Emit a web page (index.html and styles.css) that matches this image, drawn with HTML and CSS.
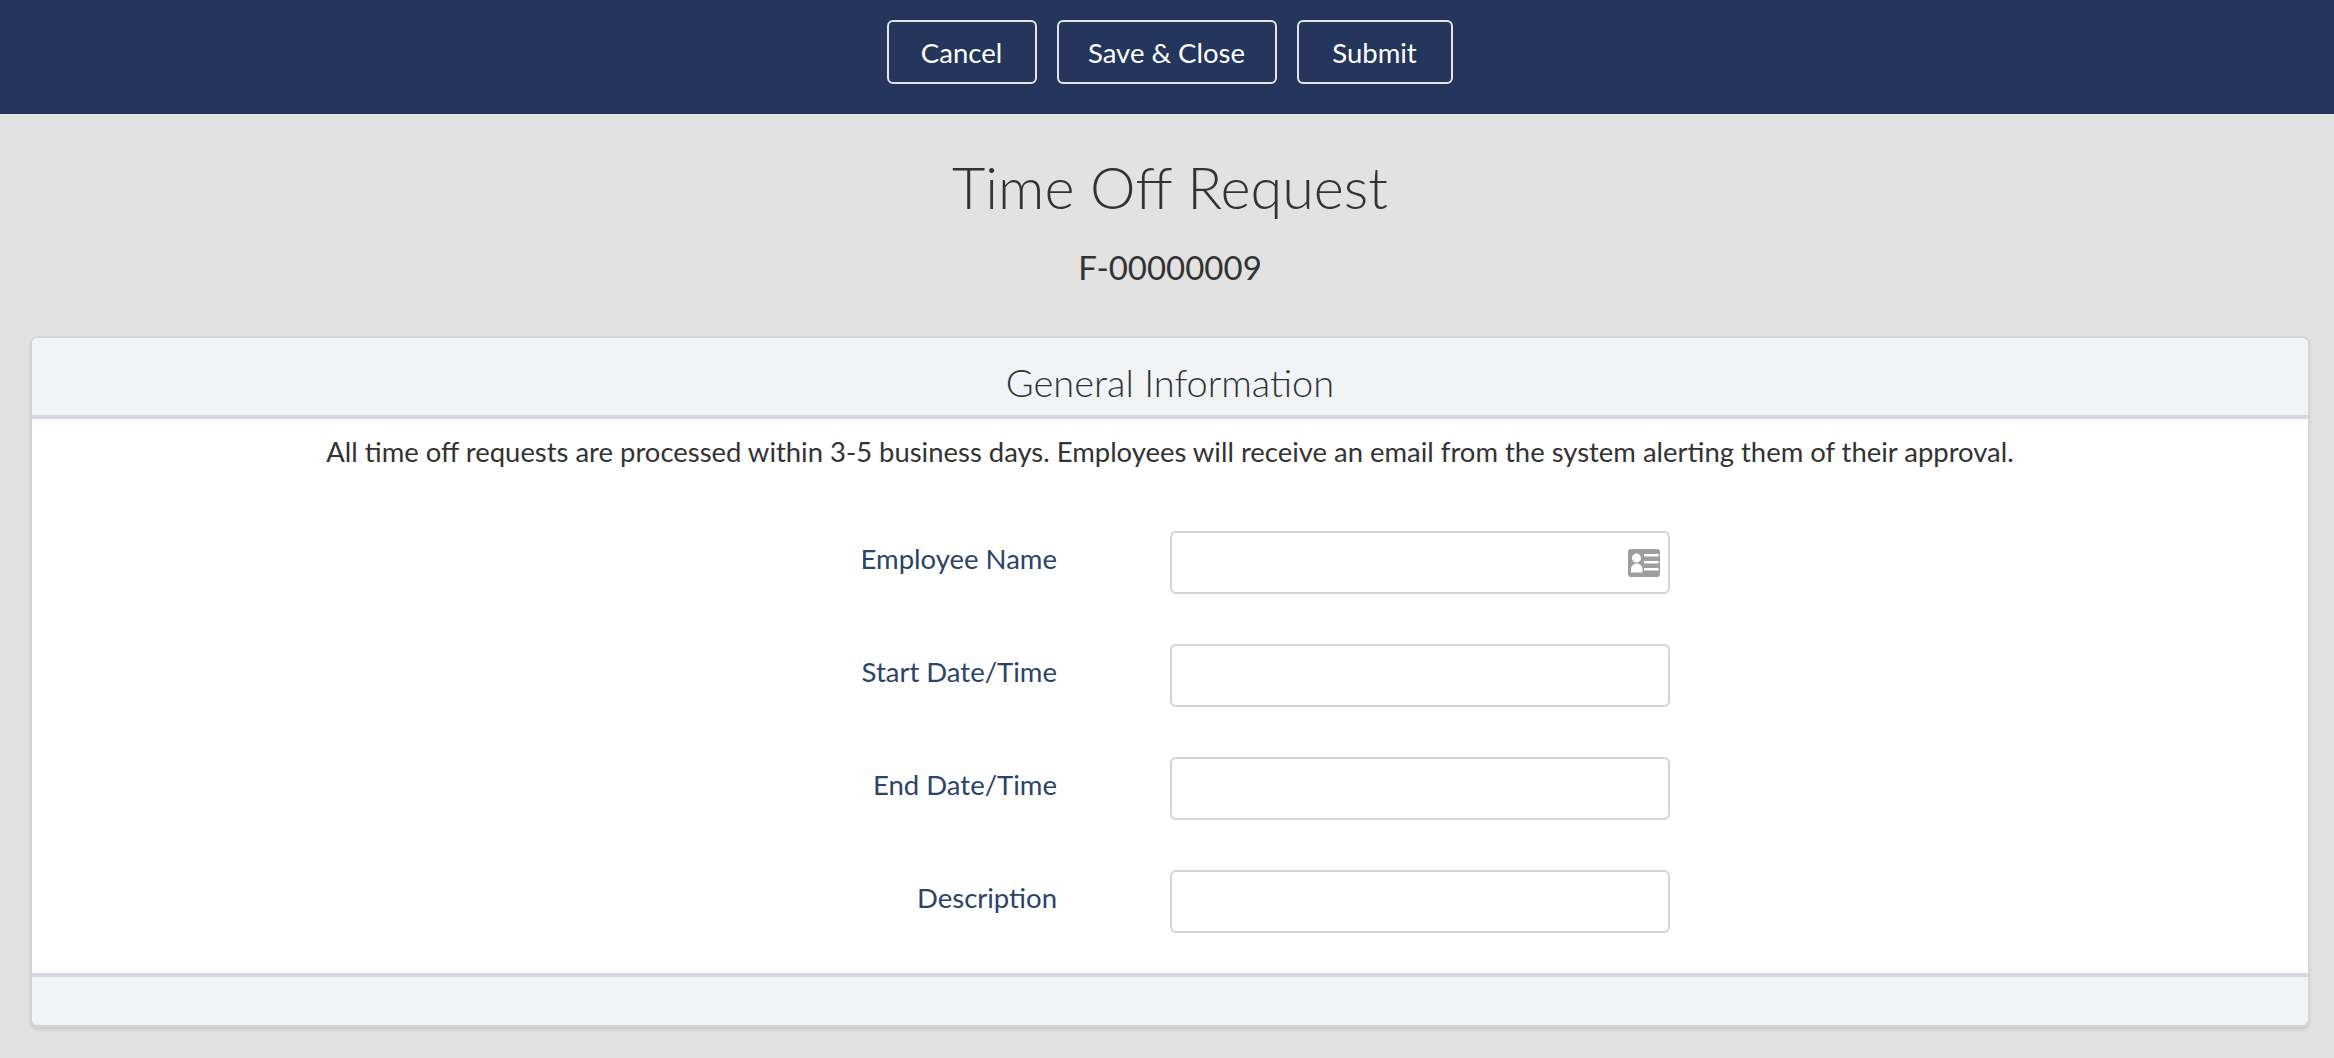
FILE: index.html
```html
<!DOCTYPE html>
<html lang="en">
<head>
<meta charset="utf-8">
<title>Time Off Request</title>
<link rel="stylesheet" href="styles.css">
</head>
<body>
<header class="topbar">
  <button class="btn btn-cancel">Cancel</button>
  <button class="btn btn-save">Save &amp; Close</button>
  <button class="btn btn-submit">Submit</button>
</header>
<div class="heading">
  <h1 class="title">Time Off Request</h1>
  <div class="record">F-00000009</div>
</div>
<section class="card">
  <div class="card-head"><h2 class="card-title">General Information</h2></div>
  <div class="card-body">
    <p class="intro">All time off requests are processed within 3-5 business days. Employees will receive an email from the system alerting them of their approval.</p>
    <div class="form">
      <div class="row">
        <label class="label">Employee Name</label>
        <div class="input">
          <svg class="icon" viewBox="0 0 32 28"><path fill="#9e9e9e" fill-rule="evenodd" d="M3 0h26a3 3 0 0 1 3 3v22a3 3 0 0 1-3 3H3a3 3 0 0 1-3-3V3a3 3 0 0 1 3-3zM8.500 4.500a4.500 4.500 0 1 0 0 9 4.500 4.500 0 0 0 0-9zM3 20v3.500h11.500V20c0-3-2.500-5.500-5.750-5.500S3 17 3 20zM16 5v2.500h14.500V5zM16 12v2.500h14.500V12zM16 19v2.500h14.500V19z"/></svg>
        </div>
      </div>
      <div class="row"><label class="label">Start Date/Time</label><div class="input"></div></div>
      <div class="row"><label class="label">End Date/Time</label><div class="input"></div></div>
      <div class="row"><label class="label">Description</label><div class="input"></div></div>
    </div>
  </div>
  <div class="card-foot"></div>
</section>
</body>
</html>
```
FILE: styles.css
```css
* { box-sizing: border-box; }
html, body { margin: 0; height: 100%; }
body {
  background: #e2e2e2;
  font-family: "Lato", "Open Sans", sans-serif;
  color: #333;
  overflow: hidden;
}
.topbar {
  height: 114px;
  background: #24365b;
  display: flex;
  justify-content: center;
  gap: 20px;
  padding-top: 20px;
  padding-left: 5px;
}
.btn {
  height: 64px;
  padding: 0;
  background: transparent;
  border: 2px solid #e4e4e4;
  border-radius: 6px;
  color: #fff;
  font: 27.500px "Lato", sans-serif;
}
.btn-cancel { width: 150px; }
.btn-save { width: 220px; }
.btn-submit { width: 156px; }
.heading { text-align: center; height: 222px; padding: 35px 0 0 6px; }
.title { margin: 0; font-size: 57.600px; font-weight: 300; line-height: 76px; }
.record { margin-top: 22px; font-size: 33px; line-height: 40px; }
.card {
  margin: 0 24px 0 30px;
  border: 2px solid #d8d6d2;
  border-radius: 8px;
  background: #fff;
  box-shadow: 0 3px 3px rgba(0,0,0,.1);
  overflow: hidden;
}
.card-head { height: 81px; background: #f0f4f7; border-bottom: 4px solid #d4d8e4; text-align: center; padding-top: 20px; }
.card-title { margin: 0; font-size: 38px; font-weight: 300; line-height: 48px; }
.card-body { height: 554px; }
.intro { margin: 0; padding-top: 15px; text-align: center; font-size: 27.450px; line-height: 36px; }
.form { margin-top: 61px; display: flex; flex-direction: column; gap: 50px; }
.row { display: flex; height: 63px; }
.label { width: 1025px; text-align: right; color: #2b4468; font-size: 27.500px; line-height: 56px; }
.input {
  margin-left: 113px;
  width: 500px;
  height: 63px;
  border: 2px solid #d4d4d4;
  border-radius: 6px;
  background: #fff;
  display: flex;
  align-items: center;
  justify-content: flex-end;
  padding-right: 8px;
}
.icon { width: 32px; height: 28px; }
.card-foot { height: 52px; background: #f0f4f7; border-top: 4px solid #d4d8e4; }
```
